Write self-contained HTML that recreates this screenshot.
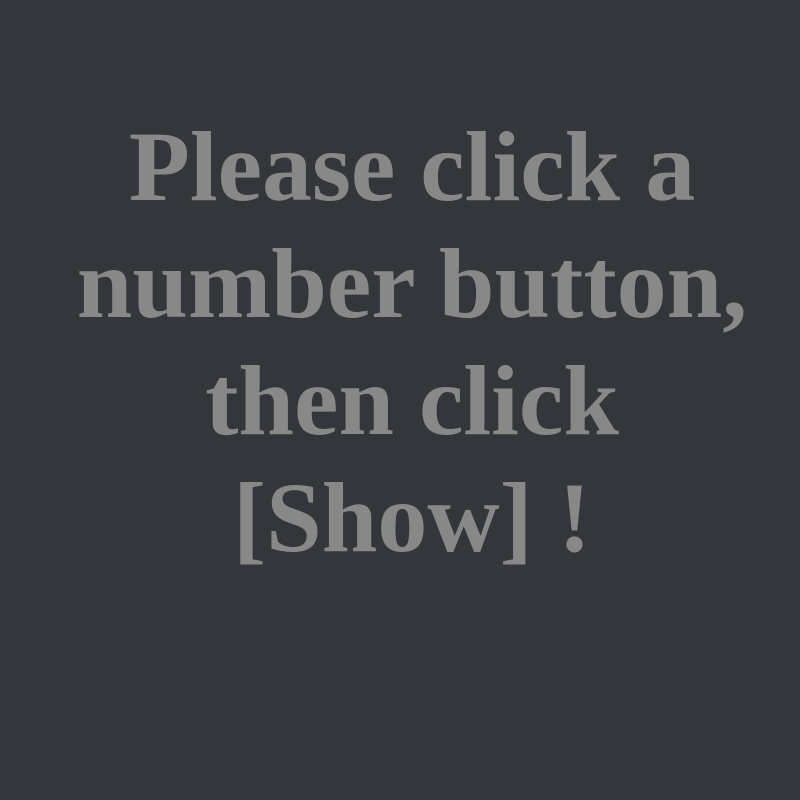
<!DOCTYPE html>
<html><head><meta charset="utf-8"><style>
html,body{margin:0;padding:0;width:800px;height:800px;background:#33373b;overflow:hidden}
.t{position:absolute;top:108px;left:0;width:776px;padding-left:24px;text-align:center;font-family:"Liberation Serif",serif;font-weight:bold;font-size:100px;line-height:117px;color:#888888}
</style></head><body>
<div class="t">Please click a<br>number button,<br>then click<br>[Show] !</div>
</body></html>
